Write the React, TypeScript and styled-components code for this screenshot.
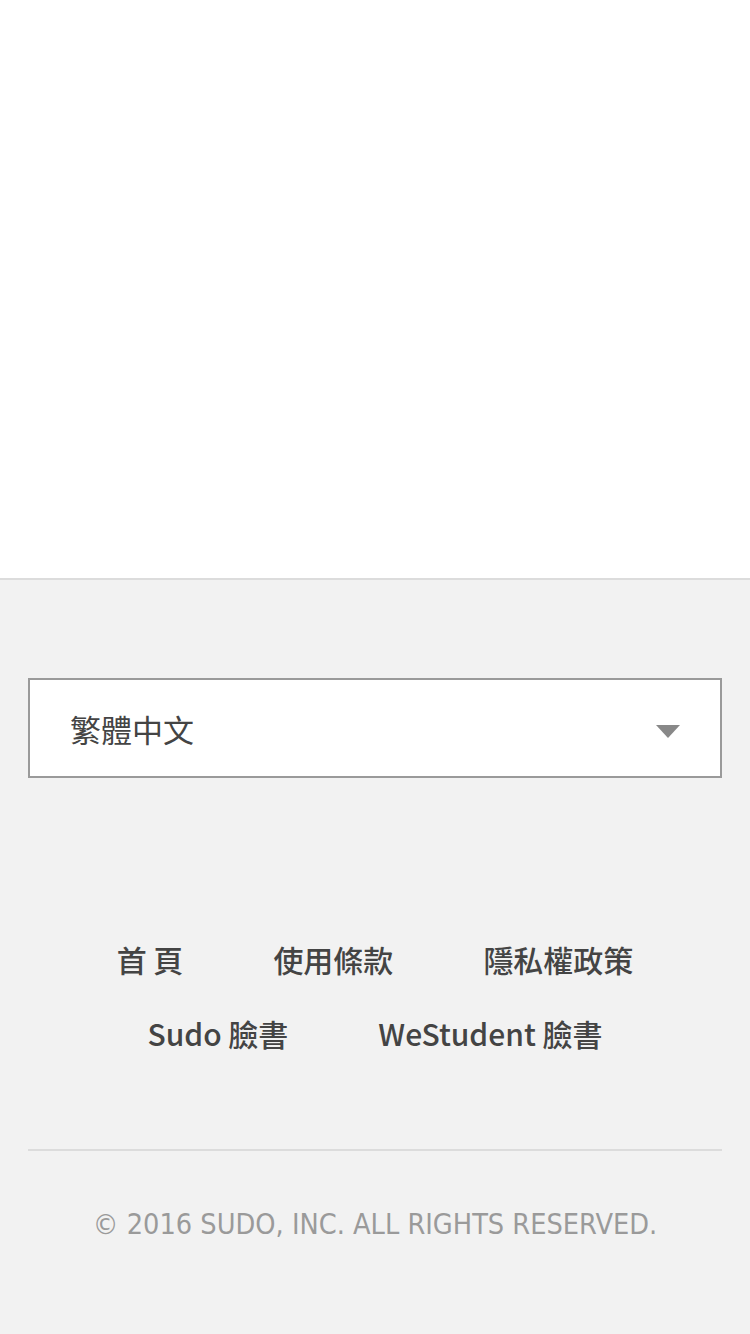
import React from 'react';
import styled, { createGlobalStyle } from 'styled-components';

const GlobalStyle = createGlobalStyle`
  html, body {
    margin: 0;
    padding: 0;
    background: #f2f2f2;
  }
  body {
    font-family: 'Noto Sans CJK TC', 'Noto Sans', sans-serif;
  }
`;

const Page = styled.div`
  width: 750px;
  min-height: 1334px;
  display: flex;
  flex-direction: column;
`;

const Content = styled.div`
  height: 578px;
  background: #ffffff;
  border-bottom: 2px solid #dcdcdc;
`;

const Footer = styled.footer`
  flex: 1;
  background: #f2f2f2;
  padding: 98px 28px 0;
  display: flex;
  flex-direction: column;
`;

const SelectBox = styled.div`
  height: 96px;
  border: 2px solid #9a9a9a;
  background: #ffffff;
  display: flex;
  align-items: center;
  justify-content: space-between;
  padding: 0 40px;
`;

const SelectLabel = styled.span`
  font-size: 31px;
  color: #444444;
  font-weight: 400;
`;

const Caret = styled.span`
  width: 0;
  height: 0;
  margin-top: 6px;
  border-left: 12px solid transparent;
  border-right: 12px solid transparent;
  border-top: 13px solid #888888;
`;

const Links = styled.nav`
  margin-top: 155px;
  display: flex;
  flex-wrap: wrap;
  justify-content: center;
  padding: 0 20px;
  row-gap: 22px;
`;

const LinkItem = styled.a`
  font-size: 30px;
  line-height: 52px;
  font-weight: 500;
  color: #444444;
  text-decoration: none;
  margin: 0 45px;
`;

const Divider = styled.hr`
  margin: 90px 0 0;
  border: none;
  border-top: 2px solid #dcdcdc;
`;

const Copyright = styled.p`
  margin: 56px 0 0;
  text-align: center;
  font-family: 'DejaVu Sans Condensed', 'Noto Sans', sans-serif;
  font-stretch: condensed;
  font-size: 28.6px;
  color: #9a9a9a;
`;

const links = ['首 頁', '使用條款', '隱私權政策', 'Sudo 臉書', 'WeStudent 臉書'];

const App: React.FC = () => {
  return (
    <Page>
      <GlobalStyle />
      <Content />
      <Footer>
        <SelectBox>
          <SelectLabel>繁體中文</SelectLabel>
          <Caret />
        </SelectBox>
        <Links>
          {links.map((l) => (
            <LinkItem key={l} href="#">{l}</LinkItem>
          ))}
        </Links>
        <Divider />
        <Copyright>© 2016 SUDO, INC. ALL RIGHTS RESERVED.</Copyright>
      </Footer>
    </Page>
  );
};

export default App;
